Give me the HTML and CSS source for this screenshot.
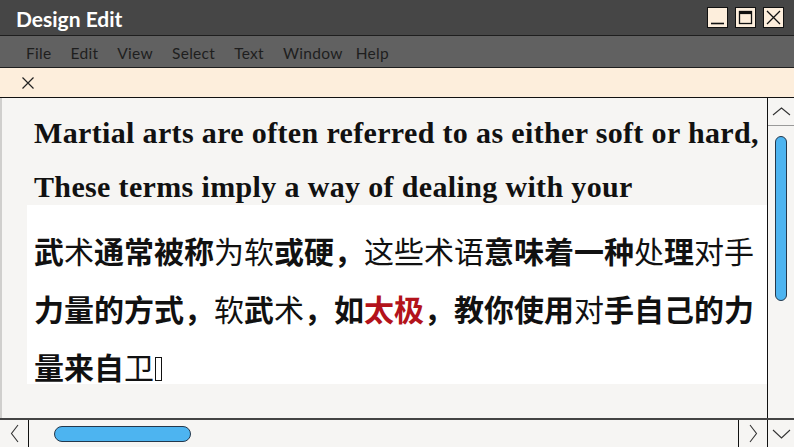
FILE: index.html
```html
<!DOCTYPE html>
<html lang="en">
<head>
<meta charset="utf-8">
<title>Design Edit</title>
<link rel="stylesheet" href="styles.css">
</head>
<body>
<div class="window">
  <div class="titlebar">
    <span class="title">Design Edit</span>
    <div class="controls">
      <span class="ctl"><svg width="19" height="19" viewBox="0 0 19 19"><line x1="3" y1="15.5" x2="16" y2="15.5" stroke="#111" stroke-width="1.6"/></svg></span>
      <span class="ctl"><svg width="19" height="19" viewBox="0 0 19 19"><rect x="3.5" y="3.5" width="12" height="12" fill="none" stroke="#111" stroke-width="1.3"/><rect x="3.5" y="3.5" width="12" height="2.6" fill="#111"/></svg></span>
      <span class="ctl"><svg width="19" height="19" viewBox="0 0 19 19"><path d="M3 3L16 16M16 3L3 16" stroke="#111" stroke-width="1.3"/></svg></span>
    </div>
  </div>
  <div class="menubar">
    <span class="mi">File</span>
    <span class="mi">Edit</span>
    <span class="mi">View</span>
    <span class="mi">Select</span>
    <span class="mi">Text</span>
    <span class="mi">Window</span>
    <span class="mi help">Help</span>
  </div>
  <div class="infobar">
    <svg class="close" width="14" height="14" viewBox="0 0 14 14"><path d="M1.5 1.5L12.5 12.5M12.5 1.5L1.5 12.5" stroke="#222" stroke-width="1.2"/></svg>
  </div>
  <div class="main">
    <div class="content">
      <p class="en">Martial arts are often referred to as either soft or hard,<br>These terms imply a way of dealing with your</p>
      <div class="cn"><p>武<span class="lt">术</span>通常被称<span class="lt">为软</span>或硬，<span class="lt">这些术语</span>意味着一种<span class="lt">处</span>理<span class="lt">对手</span>力量的方式，<span class="lt">软</span>武<span class="lt">术</span>，如<span class="red">太极</span>，教你使用<span class="lt">对</span>手自己的力量来自<span class="lt">卫</span><span class="tofu"></span></p></div>
    </div>
    <div class="vscroll">
      <div class="vup"><svg width="19" height="9" viewBox="0 0 19 9"><path d="M1 8L9.5 1L18 8" fill="none" stroke="#333" stroke-width="1.1"/></svg></div>
      <div class="vtrack"><div class="vthumb"></div></div>
    </div>
  </div>
  <div class="hscroll">
    <div class="hleft"><svg width="9" height="19" viewBox="0 0 9 19"><path d="M8 1L1.5 9.5L8 18" fill="none" stroke="#333" stroke-width="1.1"/></svg></div>
    <div class="htrack"><div class="hthumb"></div></div>
    <div class="hright"><svg width="9" height="19" viewBox="0 0 9 19"><path d="M1 1L7.5 9.5L1 18" fill="none" stroke="#333" stroke-width="1.1"/></svg></div>
    <div class="hcorner"><svg width="19" height="10" viewBox="0 0 19 10"><path d="M1 1L9.5 9L18 1" fill="none" stroke="#333" stroke-width="1.1"/></svg></div>
  </div>
</div>
</body>
</html>
```
FILE: styles.css
```css
html, body {
  margin: 0;
  padding: 0;
}
body {
  width: 794px;
  height: 447px;
  overflow: hidden;
  background: #f6f5f3;
}
.window {
  display: flex;
  flex-direction: column;
  width: 794px;
  height: 447px;
}
.titlebar {
  height: 35px;
  flex: none;
  background: #464646;
  border-bottom: 1px solid #1e1e1e;
  display: flex;
  align-items: center;
  justify-content: space-between;
  padding: 0 10px 0 16px;
}
.title {
  font-family: Lato, "Noto Sans", sans-serif;
  font-weight: 700;
  font-size: 21px;
  color: #ffffff;
  position: relative;
  top: 1px;
}
.controls {
  display: flex;
  gap: 7px;
  align-items: center;
}
.ctl {
  width: 19px;
  height: 19px;
  border: 1px solid #111;
  background: #fdeedc;
  display: flex;
}
.menubar {
  height: 32px;
  flex: none;
  background: #616161;
  border-bottom: 1px solid #1e1e1e;
  display: flex;
  align-items: center;
  gap: 19px;
  padding: 3px 0 0 26px;
  box-sizing: border-box;
  font-family: Lato, "Noto Sans", sans-serif;
  font-size: 15.5px;
  letter-spacing: 0.3px;
  color: #1e1e1e;
}
.mi.help {
  margin-left: -6px;
}
.infobar {
  height: 29px;
  flex: none;
  background: #fdeedc;
  border-bottom: 1px solid #111;
  display: flex;
  align-items: center;
  padding-left: 21px;
}
.main {
  flex: 1;
  display: flex;
  min-height: 0;
}
.content {
  flex: 1;
  background: #f6f5f3;
  border-left: 2px solid #d0cfcd;
  overflow: hidden;
}
.en {
  margin: 0 0 -9px 0;
  padding: 8px 0 0 32px;
  font-family: "Liberation Serif", serif;
  font-weight: 700;
  font-size: 30px;
  letter-spacing: 0.35px;
  line-height: 54px;
  color: #111;
  white-space: nowrap;
}
.cn {
  margin-left: 25px;
  height: 179px;
  background: #ffffff;
  padding: 16px 0 0 7px;
  box-sizing: border-box;
}
.cn p {
  margin: 0;
  width: 725px;
  font-family: "Noto Sans CJK SC", sans-serif;
  font-weight: 700;
  font-size: 30px;
  line-height: 58px;
  color: #111;
}
.cn .lt {
  font-weight: 400;
}
.cn .red {
  color: #b3131b;
}
.tofu {
  display: inline-block;
  width: 5px;
  height: 22px;
  border: 1.5px solid #111;
  vertical-align: -2px;
  margin-left: 1px;
}
.vscroll {
  width: 26px;
  flex: none;
  border-left: 1px solid #111;
  background: #f6f5f3;
  display: flex;
  flex-direction: column;
}
.vup {
  height: 27px;
  border-bottom: 1px solid #9a9a9a;
  display: flex;
  align-items: center;
  justify-content: center;
}
.vtrack {
  flex: 1;
}
.vthumb {
  margin: 10px 0 0 7px;
  width: 10px;
  height: 163px;
  background: #4db4f0;
  border: 1px solid #24384c;
  border-radius: 6px;
}
.hscroll {
  height: 27px;
  flex: none;
  border-top: 2px solid #444;
  background: #f6f5f3;
  display: flex;
}
.hleft {
  width: 28px;
  border-right: 1px solid #111;
  display: flex;
  align-items: center;
  justify-content: center;
}
.htrack {
  flex: 1;
  display: flex;
  align-items: center;
}
.hthumb {
  margin-left: 25px;
  width: 135px;
  height: 14px;
  background: #4db4f0;
  border: 1px solid #24384c;
  border-radius: 8px;
}
.hright {
  width: 28px;
  border-left: 1px solid #111;
  display: flex;
  align-items: center;
  justify-content: center;
}
.hcorner {
  width: 26px;
  border-left: 1px solid #111;
  display: flex;
  align-items: center;
  justify-content: center;
}
```
